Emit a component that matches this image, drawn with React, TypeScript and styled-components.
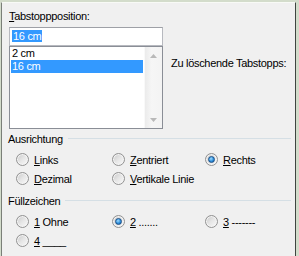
import React from "react";
import styled, { createGlobalStyle } from "styled-components";

const Global = createGlobalStyle`
  html, body { margin: 0; padding: 0; }
  body {
    width: 299px;
    height: 256px;
    overflow: hidden;
    background: #d3dccb;
    font-family: "Liberation Sans", Arial, sans-serif;
    font-size: 11px;
    color: #000;
  }
`;

const Frame = styled.div`
  box-sizing: border-box;
  margin: 2px 3px 0 1px;
  height: 254px;
  background: #f0f0f0;
  border-left: 1px solid #7a7f78;
  border-right: 1px solid #3f4540;
  border-top: 1px solid #f8faf6;
  padding: 7px 0 0 6px;
  display: flex;
  flex-direction: column;
  letter-spacing: -0.3px;
`;

const TopSection = styled.div`
  display: flex;
  margin-left: 1px;
`;

const LeftCol = styled.div`
  width: 154px;
  display: flex;
  flex-direction: column;
`;

const Label = styled.div`
  line-height: 13px;
  height: 13px;
  white-space: nowrap;
`;

const U = styled.span`
  text-decoration: underline;
  text-underline-offset: 1px;
`;

const TextBox = styled.div`
  box-sizing: border-box;
  margin-top: 4px;
  height: 19px;
  background: #fff;
  border: 1px solid #b7b9bf;
  border-top-color: #9ea0a6;
  padding: 2px 0 0 2px;
  display: flex;
`;

const Selected = styled.span`
  background: #3399ff;
  color: #fff;
  line-height: 12px;
  height: 12px;
  padding: 0 1px;
`;

const ListBox = styled.div`
  box-sizing: border-box;
  height: 83px;
  background: #fff;
  border: 1px solid #8a8e96;
  display: flex;
`;

const Items = styled.div`
  flex: 1;
  padding: 0 1px 0 1px;
  display: flex;
  flex-direction: column;
`;

const Item = styled.div<{ $sel?: boolean }>`
  height: 13px;
  line-height: 13px;
  padding-left: 1px;
  background: ${(p) => (p.$sel ? "#3399ff" : "transparent")};
  color: ${(p) => (p.$sel ? "#fff" : "#000")};
`;

const ScrollBar = styled.div`
  width: 17px;
  background: linear-gradient(to right, #ebebeb, #f6f6f6 40%, #f3f3f3);
  border-left: 1px solid #f9f9f9;
  display: flex;
  flex-direction: column;
  justify-content: space-between;
`;

const ArrowBtn = styled.div`
  height: 17px;
  display: flex;
  align-items: center;
  justify-content: center;
`;

const RightCol = styled.div`
  margin-left: 8px;
  padding-top: 47px;
`;

const GroupHeader = styled.div<{ $top: number }>`
  margin-top: ${(p) => p.$top}px;
  display: flex;
  align-items: center;
  height: 13px;
  line-height: 13px;
`;

const GroupLine = styled.div`
  flex: 1;
  height: 1px;
  background: #d5dfe5;
  margin: 0 4px 3px 5px;
`;

const RadioGrid = styled.div`
  padding: 4px 0 0 8px;
  display: grid;
  grid-template-columns: 96px 93px 1fr;
  grid-auto-rows: 19px;
`;

const Option = styled.div`
  display: flex;
  align-items: center;
  gap: 5px;
  white-space: nowrap;
`;

const RadioCircle = styled.span<{ $checked?: boolean }>`
  position: relative;
  box-sizing: border-box;
  width: 13px;
  height: 13px;
  border-radius: 50%;
  border: 1px solid #929292;
  background: linear-gradient(135deg, #c9c9c9 0%, #e6e6e6 50%, #fafafa 100%);
  box-shadow: inset 0 0 0 1px #f4f4f4;
  flex-shrink: 0;
  &::after {
    content: "";
    display: ${(p) => (p.$checked ? "block" : "none")};
    position: absolute;
    left: 2px;
    top: 2px;
    width: 7px;
    height: 7px;
    box-sizing: border-box;
    border-radius: 50%;
    border: 1px solid #1b4f86;
    background: radial-gradient(circle at 40% 35%, #9fdcff 0%, #2f8fdc 55%, #0e5aa6 100%);
  }
`;

function Radio({ checked, children }: { checked?: boolean; children: React.ReactNode }) {
  return (
    <Option>
      <RadioCircle $checked={checked} />
      <span>{children}</span>
    </Option>
  );
}

function Arrow({ up }: { up?: boolean }) {
  return (
    <svg width="7" height="4" viewBox="0 0 7 4">
      <path d={up ? "M0 4 L3.5 0 L7 4 Z" : "M0 0 L3.5 4 L7 0 Z"} fill="#b9b9b9" />
    </svg>
  );
}

export default function App() {
  return (
    <>
      <Global />
      <Frame>
        <TopSection>
          <LeftCol>
            <Label>
              <U>T</U>abstoppposition:
            </Label>
            <TextBox>
              <Selected>16 cm</Selected>
            </TextBox>
            <ListBox>
              <Items>
                <Item>2 cm</Item>
                <Item $sel>16 cm</Item>
              </Items>
              <ScrollBar>
                <ArrowBtn>
                  <Arrow up />
                </ArrowBtn>
                <ArrowBtn>
                  <Arrow />
                </ArrowBtn>
              </ScrollBar>
            </ListBox>
          </LeftCol>
          <RightCol>
            <Label>Zu löschende Tabstopps:</Label>
          </RightCol>
        </TopSection>

        <GroupHeader $top={4}>
          <span>Ausrichtung</span>
          <GroupLine />
        </GroupHeader>
        <RadioGrid>
          <Radio>
            <U>L</U>inks
          </Radio>
          <Radio>
            <U>Z</U>entriert
          </Radio>
          <Radio checked>
            <U>R</U>echts
          </Radio>
          <Radio>
            <U>D</U>ezimal
          </Radio>
          <Radio>
            <U>V</U>ertikale Linie
          </Radio>
        </RadioGrid>

        <GroupHeader $top={7}>
          <span>Füllzeichen</span>
          <GroupLine />
        </GroupHeader>
        <RadioGrid>
          <Radio>
            <U>1</U> Ohne
          </Radio>
          <Radio checked>
            <U>2</U> .......
          </Radio>
          <Radio>
            <U>3</U> -------
          </Radio>
          <Radio>
            <U>4</U> ____
          </Radio>
        </RadioGrid>
      </Frame>
    </>
  );
}
